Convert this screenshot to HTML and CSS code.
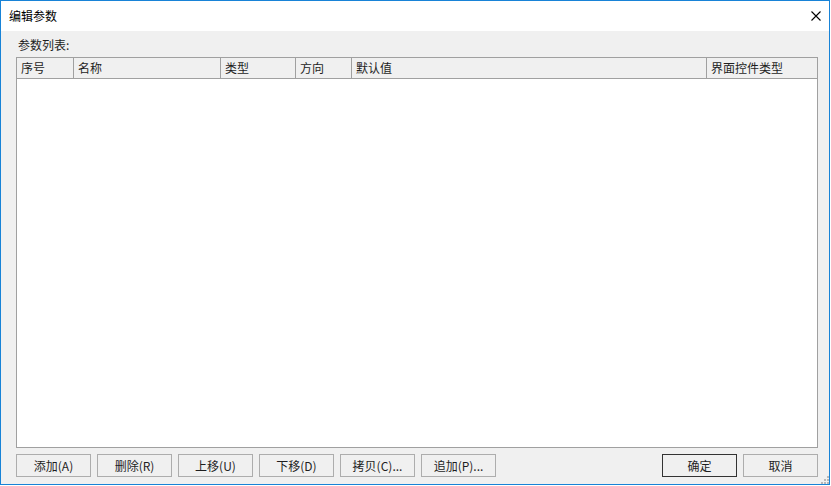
FILE: index.html
```html
<!DOCTYPE html>
<html>
<head>
<meta charset="utf-8">
<link rel="stylesheet" href="styles.css">
</head>
<body>
<div class="window">
  <div class="titlebar">
    <span class="title">编辑参数</span>
    <svg class="close" width="10" height="10" viewBox="0 0 10 10"><path d="M0.5 0.5L9.5 9.5M9.5 0.5L0.5 9.5" stroke="#000" stroke-width="1.1" fill="none"/></svg>
  </div>
  <div class="content">
    <div class="label">参数列表:</div>
    <div class="table">
      <div class="thead">
        <div class="th c1">序号</div>
        <div class="th c2">名称</div>
        <div class="th c3">类型</div>
        <div class="th c4">方向</div>
        <div class="th c5">默认值</div>
        <div class="th c6">界面控件类型</div>
      </div>
      <div class="tbody"></div>
    </div>
    <div class="buttons">
      <div class="group">
        <button class="btn">添加(A)</button>
        <button class="btn">删除(R)</button>
        <button class="btn">上移(U)</button>
        <button class="btn">下移(D)</button>
        <button class="btn">拷贝(C)...</button>
        <button class="btn">追加(P)...</button>
      </div>
      <div class="group">
        <button class="btn default">确定</button>
        <button class="btn">取消</button>
      </div>
    </div>
    <svg class="grip" width="9" height="9" viewBox="0 0 9 9">
      <rect x="7" y="1" width="2" height="2" fill="#b8b8b8"/>
      <rect x="4" y="4" width="2" height="2" fill="#b8b8b8"/>
      <rect x="7" y="4" width="2" height="2" fill="#b8b8b8"/>
      <rect x="1" y="7" width="2" height="2" fill="#b8b8b8"/>
      <rect x="4" y="7" width="2" height="2" fill="#b8b8b8"/>
      <rect x="7" y="7" width="2" height="2" fill="#b8b8b8"/>
    </svg>
  </div>
</div>
</body>
</html>
```
FILE: styles.css
```css
html, body {
  margin: 0;
  padding: 0;
  background: #ffffff;
}
body {
  width: 831px;
  height: 486px;
  font-family: "Noto Sans CJK SC", "Microsoft YaHei", sans-serif;
  font-size: 12px;
  color: #1a1a1a;
}
.window {
  width: 830px;
  height: 485px;
  box-sizing: border-box;
  border: 1px solid #1883d7;
  display: flex;
  flex-direction: column;
  background: #f0f0f0;
}
.titlebar {
  height: 30px;
  background: #ffffff;
  display: flex;
  align-items: center;
  justify-content: space-between;
  padding: 0 8px 0 8px;
  flex: none;
}
.title {
  color: #000;
  font-size: 12px;
  line-height: 14px;
}
.close {
  display: block;
  margin-top: 0;
}
.content {
  flex: 1;
  position: relative;
  padding: 6px 11px 0 15px;
  display: flex;
  flex-direction: column;
}
.label {
  line-height: 14px;
  height: 14px;
  margin-top: 1px;
  margin-bottom: 5px;
  padding-left: 2px;
  color: #1e1e1e;
}
.table {
  height: 391px;
  box-sizing: border-box;
  border: 1px solid #a0a0a0;
  background: #ffffff;
  display: flex;
  flex-direction: column;
}
.thead {
  display: grid;
  grid-template-columns: 56px 147px 75px 56px 355px 1fr;
  height: 21px;
  box-sizing: border-box;
  border-bottom: 1px solid #a0a0a0;
  background: #f0f0f0;
}
.th {
  padding-left: 4px;
  line-height: 20px;
  white-space: nowrap;
  color: #1e1e1e;
}
.th + .th {
  border-left: 1px solid #a0a0a0;
}
.tbody {
  flex: 1;
}
.buttons {
  margin-top: 6px;
  display: flex;
  justify-content: space-between;
}
.group {
  display: flex;
  gap: 6px;
}
.btn {
  width: 75px;
  height: 23px;
  box-sizing: border-box;
  border: 1px solid #adadad;
  background: #f0f0f0;
  font-family: "Noto Sans CJK SC", "Microsoft YaHei", sans-serif;
  font-size: 12px;
  color: #1e1e1e;
  padding: 0;
  line-height: 20px;
}
.btn.default {
  border-color: #333333;
}
.grip {
  position: absolute;
  right: 0;
  bottom: 0;
}
```
